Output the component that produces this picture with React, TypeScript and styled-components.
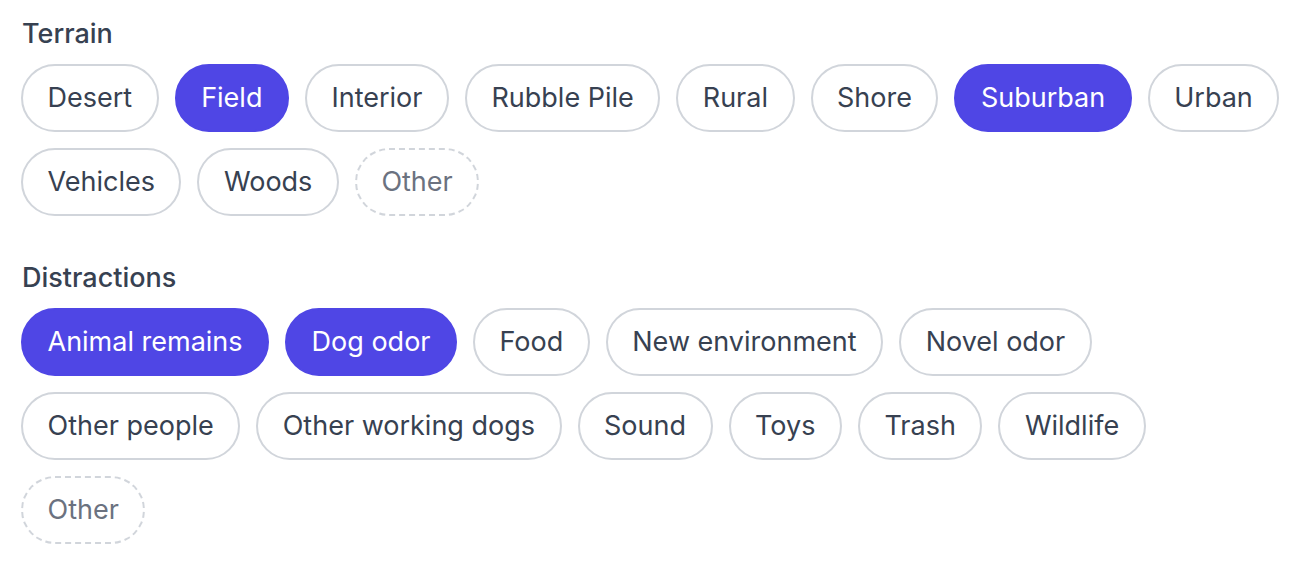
import React, { useState } from 'react';
import styled, { createGlobalStyle } from 'styled-components';

const GlobalStyle = createGlobalStyle`
  html, body {
    margin: 0;
    padding: 0;
    background: #ffffff;
    font-family: Inter, "Noto Sans", "Liberation Sans", sans-serif;
    -webkit-font-smoothing: antialiased;
  }
`;

const Page = styled.div`
  display: flex;
  flex-direction: column;
  gap: 44px;
  padding: 16px 22px 22px 21px;
`;

const Section = styled.section`
  display: flex;
  flex-direction: column;
  gap: 12px;
`;

const Label = styled.div`
  font-size: 27px;
  line-height: 36px;
  font-weight: 500;
  color: #374151;
  padding-left: 1px;
`;

const ChipList = styled.div`
  display: flex;
  flex-wrap: wrap;
  gap: 16px 16px;
`;

const Chip = styled.button<{ $selected?: boolean; $other?: boolean }>`
  font-family: inherit;
  font-size: 27px;
  line-height: 36px;
  font-weight: 400;
  padding: 14px 24.5px;
  border-radius: 999px;
  border: 2px ${(p) => (p.$other ? 'dashed' : 'solid')}
    ${(p) => (p.$selected ? '#4f46e5' : '#d1d5db')};
  background: ${(p) => (p.$selected ? '#4f46e5' : '#ffffff')};
  color: ${(p) => (p.$selected ? '#ffffff' : p.$other ? '#6b7280' : '#374151')};
  cursor: pointer;
  white-space: nowrap;
`;

const terrain = ['Desert', 'Field', 'Interior', 'Rubble Pile', 'Rural', 'Shore', 'Suburban', 'Urban', 'Vehicles', 'Woods']
const distractions = [
  'Animal remains', 'Dog odor', 'Food', 'New environment', 'Novel odor',
  'Other people', 'Other working dogs', 'Sound', 'Toys', 'Trash', 'Wildlife',
]

type GroupProps = {
  title: string
  options: string[]
  initial: string[]
}

const ChipGroup: React.FC<GroupProps> = ({ title, options, initial }) => {
  const [selected, setSelected] = useState<string[]>(initial)

  const toggle = (o: string) => {
    setSelected((s) => (s.includes(o) ? s.filter((x) => x !== o) : [...s, o]))
  }

  return (
    <Section>
      <Label>{title}</Label>
      <ChipList>
        {options.map((o) => (
          <Chip key={o} $selected={selected.includes(o)} onClick={() => toggle(o)}>
            {o}
          </Chip>
        ))}
        <Chip $other>Other</Chip>
      </ChipList>
    </Section>
  )
}

export default function App() {
  return (
    <>
      <GlobalStyle />
      <Page>
        <ChipGroup title="Terrain" options={terrain} initial={['Field', 'Suburban']} />
        <ChipGroup title="Distractions" options={distractions} initial={['Animal remains', 'Dog odor']} />
      </Page>
    </>
  )
}
